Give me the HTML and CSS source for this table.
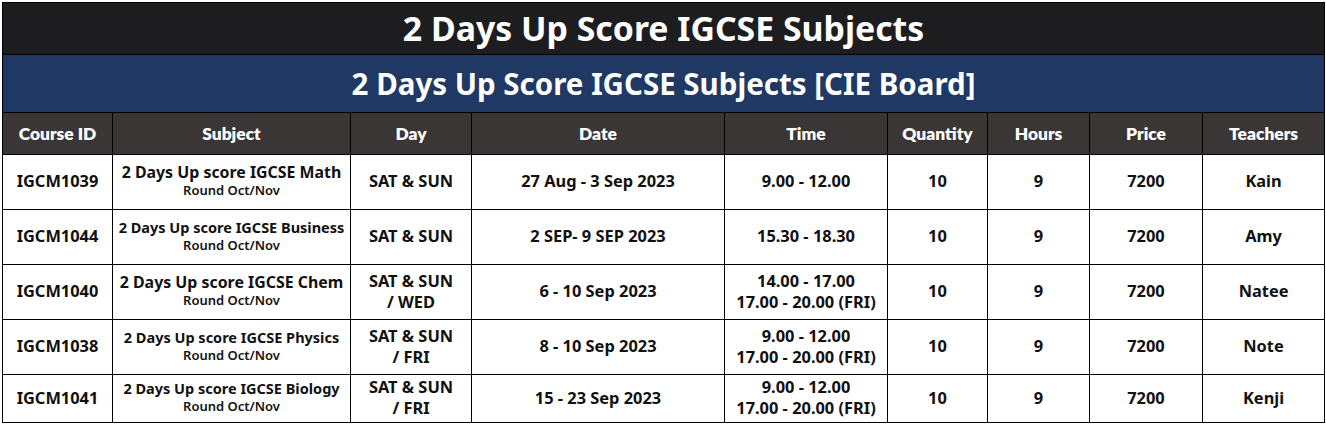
FILE: index.html
```html
<!DOCTYPE html>
<html lang="en">
<head>
<meta charset="utf-8">
<title>2 Days Up Score IGCSE Subjects</title>
<link rel="stylesheet" href="styles.css">
</head>
<body>
<table class="sheet">
  <colgroup>
    <col class="c-id"><col class="c-subj"><col class="c-day"><col class="c-date"><col class="c-time"><col class="c-qty"><col class="c-hrs"><col class="c-price"><col class="c-teach">
  </colgroup>
  <thead>
    <tr class="title-row"><th colspan="9">2 Days Up Score IGCSE Subjects</th></tr>
    <tr class="sub-row"><th colspan="9">2 Days Up Score IGCSE Subjects [CIE Board]</th></tr>
    <tr class="head-row">
      <th>Course ID</th><th>Subject</th><th>Day</th><th>Date</th><th>Time</th><th>Quantity</th><th>Hours</th><th>Price</th><th>Teachers</th>
    </tr>
  </thead>
  <tbody>
    <tr>
      <td>IGCM1039</td>
      <td class="subj">2 Days Up score IGCSE Math<span class="round">Round Oct/Nov</span></td>
      <td>SAT &amp; SUN</td>
      <td>27 Aug - 3 Sep 2023</td>
      <td>9.00 - 12.00</td>
      <td>10</td><td>9</td><td>7200</td><td>Kain</td>
    </tr>
    <tr>
      <td>IGCM1044</td>
      <td class="subj small">2 Days Up score IGCSE Business<span class="round">Round Oct/Nov</span></td>
      <td>SAT &amp; SUN</td>
      <td>2 SEP- 9 SEP 2023</td>
      <td>15.30 - 18.30</td>
      <td>10</td><td>9</td><td>7200</td><td>Amy</td>
    </tr>
    <tr>
      <td>IGCM1040</td>
      <td class="subj">2 Days Up score IGCSE Chem<span class="round">Round Oct/Nov</span></td>
      <td class="two">SAT &amp; SUN<br>/ WED</td>
      <td>6 - 10 Sep 2023</td>
      <td class="two">14.00 - 17.00<br>17.00 - 20.00 (FRI)</td>
      <td>10</td><td>9</td><td>7200</td><td>Natee</td>
    </tr>
    <tr>
      <td>IGCM1038</td>
      <td class="subj small">2 Days Up score IGCSE Physics<span class="round">Round Oct/Nov</span></td>
      <td class="two">SAT &amp; SUN<br>/ FRI</td>
      <td>8 - 10 Sep 2023</td>
      <td class="two">9.00 - 12.00<br>17.00 - 20.00 (FRI)</td>
      <td>10</td><td>9</td><td>7200</td><td>Note</td>
    </tr>
    <tr class="last">
      <td>IGCM1041</td>
      <td class="subj small">2 Days Up score IGCSE Biology<span class="round">Round Oct/Nov</span></td>
      <td class="two">SAT &amp; SUN<br>/ FRI</td>
      <td>15 - 23 Sep 2023</td>
      <td class="two">9.00 - 12.00<br>17.00 - 20.00 (FRI)</td>
      <td>10</td><td>9</td><td>7200</td><td>Kenji</td>
    </tr>
  </tbody>
</table>
</body>
</html>
```

FILE: styles.css
```css
html, body {
  margin: 0;
  padding: 0;
  background: #ffffff;
}
body {
  padding: 2px 0 0 2px;
  font-family: "Noto Sans", "Open Sans", sans-serif;
  color: #111111;
}
.sheet {
  border-collapse: collapse;
  table-layout: fixed;
  width: 1322px;
}
.c-id { width: 110px; }
.c-subj { width: 238px; }
.c-day { width: 121px; }
.c-date { width: 253px; }
.c-time { width: 163px; }
.c-qty { width: 100px; }
.c-hrs { width: 102px; }
.c-price { width: 113px; }
.c-teach { width: 122px; }

.sheet th, .sheet td {
  border: 1px solid #000000;
  padding: 0;
  text-align: center;
  vertical-align: middle;
  overflow: hidden;
  white-space: nowrap;
}
.title-row th {
  height: 51px;
  background: #1d1d1f;
  color: #ffffff;
  font-family: "Noto Sans", sans-serif;
  font-weight: 700;
  font-size: 33.8px;
  line-height: 51px;
}
.sub-row th {
  height: 57px;
  background: #203864;
  color: #ffffff;
  font-family: "Noto Sans", sans-serif;
  font-weight: 700;
  font-size: 29.5px;
  line-height: 57px;
}
.head-row th {
  height: 41px;
  background: #3a3636;
  color: #ffffff;
  font-family: Lato, "Noto Sans", sans-serif;
  font-weight: 800;
  font-size: 17.4px;
}
tbody td {
  height: 54px;
  font-size: 16.4px;
  font-weight: 700;
  line-height: 21px;
}
tbody td::after {
  content: "";
  display: block;
  height: 3px;
}
tbody tr.last td {
  height: 47px;
}
.subj {
  font-size: 15.9px;
  line-height: 19px;
}
.subj.small {
  font-size: 14.5px;
}
.round {
  display: block;
  font-size: 13px;
  font-weight: 600;
  line-height: 17px;
}
```
